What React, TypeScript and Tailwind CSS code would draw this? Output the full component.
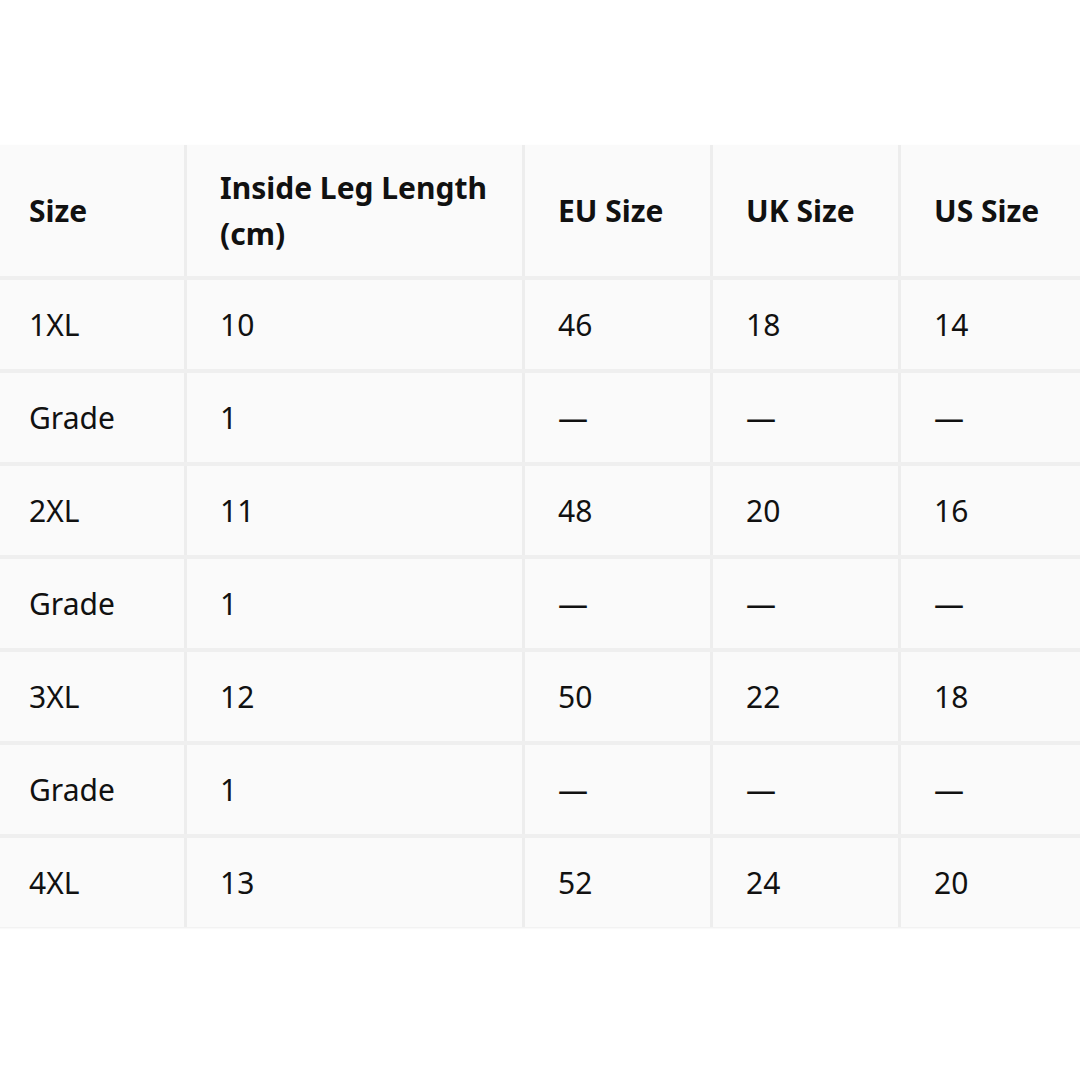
const headers = ["Size", "Inside Leg Length (cm)", "EU Size", "UK Size", "US Size"];

const rows = [
  ["1XL", "10", "46", "18", "14"],
  ["Grade", "1", "—", "—", "—"],
  ["2XL", "11", "48", "20", "16"],
  ["Grade", "1", "—", "—", "—"],
  ["3XL", "12", "50", "22", "18"],
  ["Grade", "1", "—", "—", "—"],
  ["4XL", "13", "52", "24", "20"],
];

const cols = "grid grid-cols-[188px_338px_188px_188px_186px]";

export default function App() {
  return (
    <div className="w-[1080px] h-[1080px] bg-white overflow-hidden pt-[145px] font-['Noto_Sans',sans-serif] text-[30px] text-[#111]">
      <div className="-ml-[4px] w-[1088px] bg-[#fafafa] shadow-[0_1px_2px_rgba(0,0,0,0.08)]">
        <div className={`${cols} h-[131px]`}>
          {headers.map((h, i) => (
            <div
              key={h}
              className={`flex items-center pl-[33px] pr-4 font-bold leading-[46px] ${i > 0 ? "border-l-[3px] border-[#ededed]" : ""}`}
            >
              {i === 1 ? (
                <span>
                  Inside Leg Length
                  <br />
                  (cm)
                </span>
              ) : (
                h
              )}
            </div>
          ))}
        </div>
        {rows.map((r, ri) => (
          <div key={ri} className={`${cols} h-[93px] border-t-4 border-[#efefef]`}>
            {r.map((c, i) => (
              <div
                key={i}
                className={`flex items-center pl-[33px] ${i > 0 ? "border-l-[3px] border-[#ededed]" : ""}`}
              >
                {c}
              </div>
            ))}
          </div>
        ))}
      </div>
    </div>
  );
}
